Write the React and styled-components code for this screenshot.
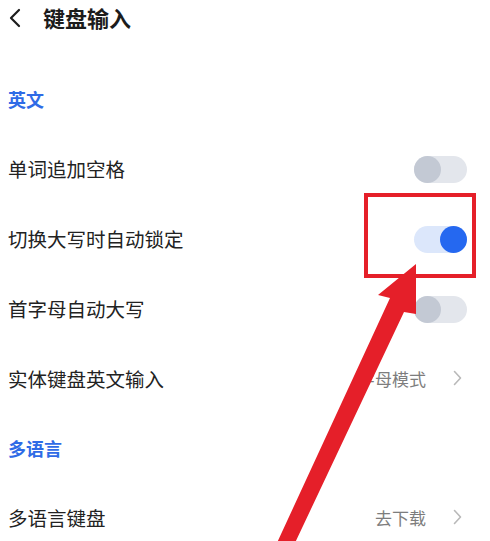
import React from 'react'
import styled, { createGlobalStyle } from 'styled-components'

const GlobalStyle = createGlobalStyle`
  html, body {
    margin: 0;
    padding: 0;
    background: #ffffff;
  }
  body {
    font-family: "Noto Sans CJK SC", "Noto Sans", sans-serif;
    overflow: hidden;
  }
`

const data = {
  title: '键盘输入',
  sections: [
    {
      title: '英文',
      rows: [
        { label: '单词追加空格', type: 'toggle', on: false },
        { label: '切换大写时自动锁定', type: 'toggle', on: true },
        { label: '首字母自动大写', type: 'toggle', on: false },
        { label: '实体键盘英文输入', type: 'link', value: '字母模式' }
      ]
    },
    {
      title: '多语言',
      rows: [
        { label: '多语言键盘', type: 'link', value: '去下载' }
      ]
    }
  ]
}

const Page = styled.div`
  position: relative;
  width: 490px;
  height: 541px;
  overflow: hidden;
  background: #fff;
`

const Header = styled.header`
  display: flex;
  align-items: center;
  height: 34px;
  padding-left: 9px;
  gap: 22px;
`

const BackButton = styled.span`
  display: flex;
  align-items: center;
  width: 12px;
  height: 20px;
  margin-top: 2px;
`

const Title = styled.h1`
  margin: 0;
  font-size: 22px;
  font-weight: 700;
  color: #1c1c1c;
  letter-spacing: 0;
`

const List = styled.div`
  margin-top: 30px;
`

const SectionTitle = styled.div`
  display: flex;
  align-items: center;
  height: 69px;
  padding-left: 8px;
  font-size: 18px;
  font-weight: 700;
  color: #2f6be6;
`

const Row = styled.div`
  display: flex;
  align-items: center;
  justify-content: space-between;
  height: 70px;
  padding: 0 23px 0 8px;
`

const Label = styled.span`
  font-size: 19.5px;
  color: #222;
`

const Trailing = styled.span`
  display: flex;
  align-items: center;
  gap: 27px;
  padding-right: 5px;
`

const Value = styled.span`
  font-size: 17px;
  color: #7d7d7d;
`

const Track = styled.span`
  display: flex;
  align-items: center;
  justify-content: ${p => (p.$on ? 'flex-end' : 'flex-start')};
  width: 53px;
  height: 27px;
  border-radius: 14px;
  margin-top: ${p => p.$shift}px;
  background: ${p => (p.$on ? '#dce7fb' : '#e3e6ec')};
`

const Knob = styled.span`
  width: 27px;
  height: 27px;
  border-radius: 50%;
  background: ${p => (p.$on ? '#2568f0' : '#c3c9d4')};
`

const Overlay = styled.svg`
  position: absolute;
  left: 0;
  top: 0;
  pointer-events: none;
`

const Chevron = ({ color = '#b9b9b9', w = 9, h = 16, stroke = 1.6 }) => (
  <svg width={w} height={h} viewBox={`0 0 ${w} ${h}`}>
    <polyline points={`1.5,1.5 ${w - 1.5},${h / 2} 1.5,${h - 1.5}`} fill='none' stroke={color} strokeWidth={stroke} strokeLinecap='round' strokeLinejoin='round' />
  </svg>
)

const Toggle = ({ on }) => (
  <Track $on={on} $shift={2}>
    <Knob $on={on} />
  </Track>
)

const SettingRow = ({ row }) => (
  <Row>
    <Label>{row.label}</Label>
    {row.type === 'toggle'
      ? <Toggle on={row.on} />
      : (
        <Trailing>
          <Value>{row.value}</Value>
          <Chevron />
        </Trailing>
      )}
  </Row>
)

const App = () => {
  return (
    <Page>
      <GlobalStyle />
      <Header>
        <BackButton>
          <svg width='12' height='20' viewBox='0 0 12 20'>
            <polyline points='10,2 2,10 10,18' fill='none' stroke='#1c1c1c' strokeWidth='2.2' strokeLinecap='round' strokeLinejoin='round' />
          </svg>
        </BackButton>
        <Title>{data.title}</Title>
      </Header>
      <List>
        {data.sections.map(section => (
          <section key={section.title}>
            <SectionTitle>{section.title}</SectionTitle>
            {section.rows.map(row => <SettingRow key={row.label} row={row} />)}
          </section>
        ))}
      </List>
      <Overlay width='490' height='541' viewBox='0 0 490 541'>
        <rect x='366' y='195' width='108' height='81' fill='none' stroke='#e51f29' strokeWidth='4' />
        <polygon points='416,264 416,314 404,312 294,545 276,545 390,298 378,295' fill='#e51f29' />
      </Overlay>
    </Page>
  )
}

export default App
